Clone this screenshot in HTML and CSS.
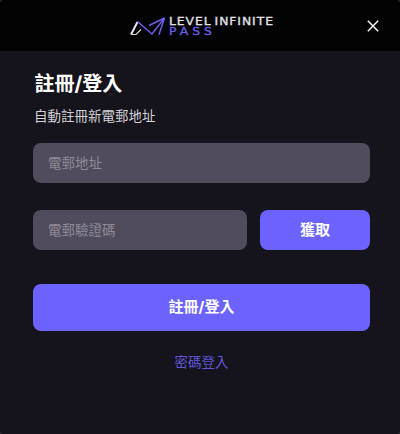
FILE: index.html
```html
<!DOCTYPE html>
<html lang="zh-Hant">
<head>
<meta charset="utf-8">
<title>LEVEL INFINITE PASS</title>
<link rel="stylesheet" href="styles.css">
</head>
<body>
<div class="dialog">
  <header class="top">
    <div class="brand">
      <svg class="mark" viewBox="0 0 36 19" width="36" height="19" fill="none">
        <path d="M1 17.5 L7.5 5" stroke="#e8e8ee" stroke-width="2"/>
        <path d="M1 17.5 H6 L11 12.5" stroke="#d8d8e0" stroke-width="1.2"/>
        <path d="M7.5 4.5 L22 17 L34.5 1 L19 8.5" stroke="#6a5fe8" stroke-width="1.5"/>
        <path d="M34.5 1 L29 17.5" stroke="#6a5fe8" stroke-width="1.5"/>
      </svg>
      <div class="words">
        <span class="w1">LEVEL INFINITE</span>
        <span class="w2">PASS</span>
      </div>
    </div>
    <svg class="close" viewBox="0 0 12 12" width="12" height="12" fill="none"><path d="M.8.8 11.2 11.2M11.2.8.8 11.2" stroke="#fff" stroke-width="1.4"/></svg>
  </header>
  <main class="body">
    <h1 class="title">註冊/登入</h1>
    <p class="sub">自動註冊新電郵地址</p>
    <div class="field full">電郵地址</div>
    <div class="row">
      <div class="field grow">電郵驗證碼</div>
      <div class="btn get">獲取</div>
    </div>
    <div class="btn submit">註冊/登入</div>
    <div class="alt">密碼登入</div>
  </main>
</div>
</body>
</html>
```
FILE: styles.css
```css
* { box-sizing: border-box; }
html, body { margin: 0; padding: 0; background: #2b2b2d; }
body { width: 400px; height: 434px; font-family: "Inter", "Noto Sans CJK TC", sans-serif; overflow: hidden; }
.dialog { width: 400px; height: 434px; background: #15131b; border-radius: 4px; overflow: hidden; display: flex; flex-direction: column; }
.top { height: 51px; flex: none; background: #030304; display: flex; align-items: center; position: relative; padding-left: 130px; }
.brand { display: flex; align-items: center; gap: 3px; margin-top: 1px; }
.mark { display: block; }
.words { display: flex; flex-direction: column; font-family: "DejaVu Sans", sans-serif; font-weight: 400; margin-top: 2px; transform: scaleX(1.12); transform-origin: left center; -webkit-text-stroke: .3px currentColor; }
.w1 { font-size: 11px; line-height: 10px; color: #e4e4e8; letter-spacing: .85px; word-spacing: -1.6px; white-space: nowrap; }
.w2 { font-size: 11px; line-height: 10px; color: #6a5fe8; letter-spacing: 3.6px; }
.close { position: absolute; left: 367px; top: 20px; }
.body { padding: 0 30px 0 33px; display: flex; flex-direction: column; }
.title { margin: 20px 0 0 1.5px; font-size: 20px; line-height: 26px; font-weight: 700; color: #fff; }
.sub { margin: 9px 0 0 1px; font-size: 13.5px; line-height: 20px; color: #d2d1d6; }
.field { height: 40.5px; background: #514b5e; border-radius: 8px; color: #8e8a98; font-size: 13.5px; line-height: 40px; padding-left: 15px; }
.full { margin-top: 16.5px; }
.row { display: flex; gap: 13px; margin-top: 26.5px; }
.grow { flex: 1; }
.btn { background: #6c63ff; border-radius: 8px; color: #fff; font-weight: 700; font-size: 15px; text-align: center; }
.get { width: 110px; height: 40.5px; line-height: 40px; }
.submit { height: 47px; line-height: 46px; margin-top: 33.5px; }
.alt { margin-top: 21.5px; text-align: center; font-size: 13.5px; line-height: 20px; color: #5f55d6; }
```
